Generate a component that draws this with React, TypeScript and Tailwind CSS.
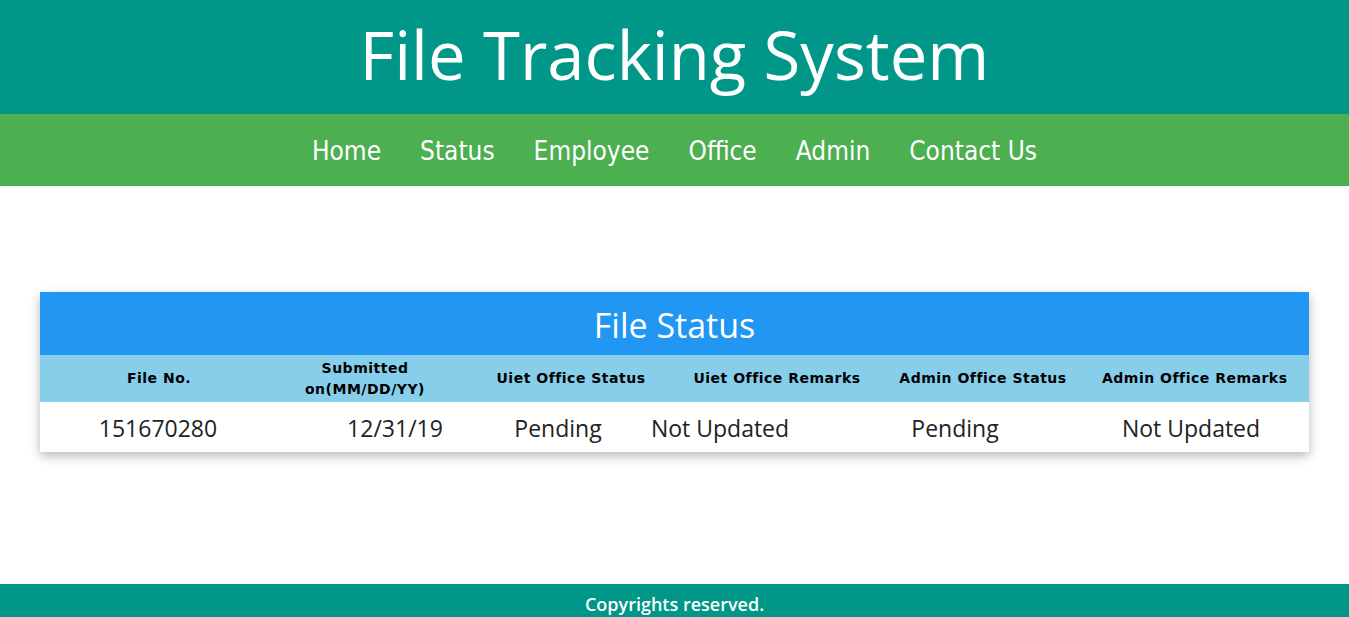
import React from 'react';

const navLinks = ['Home', 'Status', 'Employee', 'Office', 'Admin', 'Contact Us'];

const headCols = [
  { label: 'File No.', w: 'w-[238px]' },
  { label: 'Submitted on(MM/DD/YY)', w: 'w-[174px]' },
  { label: 'Uiet Office Status', w: 'w-[238px]' },
  { label: 'Uiet Office Remarks', w: 'w-[174px]' },
  { label: 'Admin Office Status', w: 'w-[238px]' },
  { label: 'Admin Office Remarks', w: 'w-[174px]' },
];

const rowCells = [
  { value: '151670280', w: 'w-[236px]' },
  { value: '12/31/19', w: 'w-[238px]' },
  { value: 'Pending', w: 'w-[88px]' },
  { value: 'Not Updated', w: 'w-[236px]' },
  { value: 'Pending', w: 'w-[234px]' },
  { value: 'Not Updated', w: 'w-[238px]' },
];

export default function App() {
  return (
    <div className="min-h-screen bg-white flex flex-col">
      {/* title banner */}
      <header className="h-[114px] bg-[#009688] flex items-center justify-center">
        <h1 className="text-white text-[67px] leading-none font-['Comic_Sans_MS','Open_Sans',sans-serif] pb-[6px]">
          File Tracking System
        </h1>
      </header>

      {/* nav */}
      <nav className="h-[72px] bg-[#4CAF50] flex items-center justify-center gap-[39px] font-['DejaVu_Sans_Condensed','DejaVu_Sans',sans-serif]">
        {navLinks.map(link => (
          <a key={link} href="#" className="text-white text-[26px] leading-none pt-[2px]">
            {link}
          </a>
        ))}
      </nav>

      <main className="flex-1 px-[40px] pt-[106px] pb-[132px]">
        <div className="bg-white shadow-[0_4px_10px_rgba(0,0,0,0.28)]">
          <div className="h-[63px] bg-[#2196F3] flex items-center justify-center">
            <h2 className="text-white text-[34px] leading-none font-['Open_Sans',sans-serif] pt-[2px]">File Status</h2>
          </div>

          <div className="h-[47px] bg-[#87CEEB] flex items-center font-['DejaVu_Sans',sans-serif]">
            {headCols.map(col => (
              <div key={col.label} className={`${col.w} shrink-0 text-center text-[14px] leading-[21px] tracking-[0.5px] font-bold text-black whitespace-nowrap`}>
                {col.label === 'Submitted on(MM/DD/YY)' ? (
                  <>
                    Submitted
                    <br />
                    on(MM/DD/YY)
                  </>
                ) : (
                  col.label
                )}
              </div>
            ))}
          </div>

          <div className="h-[50px] flex items-center pt-[3px] font-['Open_Sans',sans-serif]">
            {rowCells.map((cell, i) => (
              <div key={i} className={`${cell.w} shrink-0 text-center text-[23px] leading-none text-[#222] whitespace-nowrap`}>
                {cell.value}
              </div>
            ))}
          </div>
        </div>
      </main>

      <footer className="bg-[#009688] pt-[9px] pb-[10px] flex justify-center">
        <p className="text-white text-[18px] leading-[22px] font-semibold font-['Comic_Sans_MS','Open_Sans',sans-serif]">
          Copyrights reserved.
        </p>
      </footer>
    </div>
  );
}
